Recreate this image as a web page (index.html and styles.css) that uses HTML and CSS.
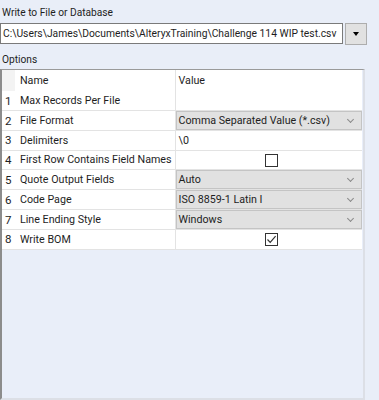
FILE: index.html
```html
<!DOCTYPE html>
<html>

<head>
    <title>Write to File or Database</title>
  <link rel="stylesheet" href="styles.css">
</head>

<body class="background">
    <div class="page">
        <div class="label top">Write to File or Database</div>
        <div class="pathrow">
            <div class="pathbox">C:\Users\James\Documents\AlteryxTraining\Challenge 114 WIP test.csv</div>
            <div class="dropbtn"><span class="tri"></span></div>
        </div>
        <div class="label opts">Options</div>

        <div class="grid">
            <table class="props" cellspacing="0" cellpadding="0">
                <tr class="head">
                    <td class="num"></td>
                    <td class="name">Name</td>
                    <td class="val">Value</td>
                </tr>
                <tr>
                    <td class="num">1</td>
                    <td class="name">Max Records Per File</td>
                    <td class="val"></td>
                </tr>
                <tr>
                    <td class="num">2</td>
                    <td class="name">File Format</td>
                    <td class="val"><div class="combo">Comma Separated Value (*.csv)<span class="chev"></span></div></td>
                </tr>
                <tr>
                    <td class="num">3</td>
                    <td class="name">Delimiters</td>
                    <td class="val text">\0</td>
                </tr>
                <tr>
                    <td class="num">4</td>
                    <td class="name">First Row Contains Field Names</td>
                    <td class="val center"><span class="check"></span></td>
                </tr>
                <tr>
                    <td class="num">5</td>
                    <td class="name">Quote Output Fields</td>
                    <td class="val"><div class="combo">Auto<span class="chev"></span></div></td>
                </tr>
                <tr>
                    <td class="num">6</td>
                    <td class="name">Code Page</td>
                    <td class="val"><div class="combo">ISO 8859-1 Latin I<span class="chev"></span></div></td>
                </tr>
                <tr>
                    <td class="num">7</td>
                    <td class="name">Line Ending Style</td>
                    <td class="val"><div class="combo">Windows<span class="chev"></span></div></td>
                </tr>
                <tr>
                    <td class="num">8</td>
                    <td class="name">Write BOM</td>
                    <td class="val center"><span class="check on"><svg width="11" height="11" viewBox="0 0 11 11"><path d="M1.5 5.5 L4.2 8.3 L9.6 2.2" fill="none" stroke="#333" stroke-width="1.2"/></svg></span></td>
                </tr>
            </table>
        </div>
    </div>
</body>

</html>
```

FILE: styles.css
```css
body{
    margin: 0;
    background-color: #e9eef8;
    font-family: Roboto, "Liberation Sans", Arial, sans-serif;
    font-size: 10.7px;
    color: #1e1e1e;
}
.page{
    width: 379px;
    height: 400px;
    display: flex;
    flex-direction: column;
}
.label{ padding-left: 2px; height: 14px; line-height: 14px; font-size: 10.2px; }
.top{ margin-top: 6px; }
.opts{ margin-top: 8px; }

.pathrow{ display: flex; align-items: flex-start; margin-top: 3px; }
.pathbox{
    width: 339px; height: 19px; line-height: 19px;
    background: #ffffff; border: 1px solid #7a7a7a;
    padding-left: 2px; box-sizing: content-box;
    white-space: nowrap; overflow: hidden;
    font-size: 10.3px;
}
.dropbtn{
    width: 20px; height: 20px; margin-left: 2px;
    background: #e1e1e1; border: 1px solid #adadad;
    display: flex; align-items: center; justify-content: center;
}
.tri{
    width: 0; height: 0;
    border-left: 3.5px solid transparent; border-right: 3.5px solid transparent;
    border-top: 4px solid #000;
}

.grid{
    margin-top: 2px;
    width: 361px; height: 329px;
    border-left: 2px solid #8c8c8c;
    border-top: 1px solid #9a9a9a;
    border-right: 2px solid #dcdfe6;
    border-bottom: 2px solid #dcdfe6;
    background: #e9eef9;
}
.props{ width: 360px; table-layout: fixed; border-collapse: collapse; background: #ffffff; }
.props td{
    height: 19.5px; padding: 0; border-bottom: 1px solid #e3e3e3;
    white-space: nowrap; overflow: hidden; vertical-align: middle;
    box-sizing: border-box;
}
.props .num{ width: 13px; padding-left: 3px; font-size: 11.5px; }
.props .name{ width: 160px; padding-left: 5px; }
.props .val{ border-left: 1px solid #e3e3e3; }
.props .text{ padding-left: 3px; }
.props .center{ text-align: center; }
.props .head td{ height: 21px; border-bottom: 0; }
.props .head .num{ background: #f3f3f3; }
.props .head .val{ padding-left: 3px; }

.combo{
    height: 19px; box-sizing: border-box;
    background: #e1e1e1; border: 1px solid #c4c4c4;
    padding-left: 2px; line-height: 17px;
    position: relative;
}
.chev{
    position: absolute; right: 8px; top: 5px;
    width: 4px; height: 4px;
    border-right: 1px solid #8a8a8a; border-bottom: 1px solid #8a8a8a;
    transform: rotate(45deg);
}
.check{
    display: inline-block; width: 11px; height: 11px;
    border: 1px solid #333; background: #fff;
    vertical-align: middle; position: relative; left: 3px;
}
.check svg{ display: block; }
```
